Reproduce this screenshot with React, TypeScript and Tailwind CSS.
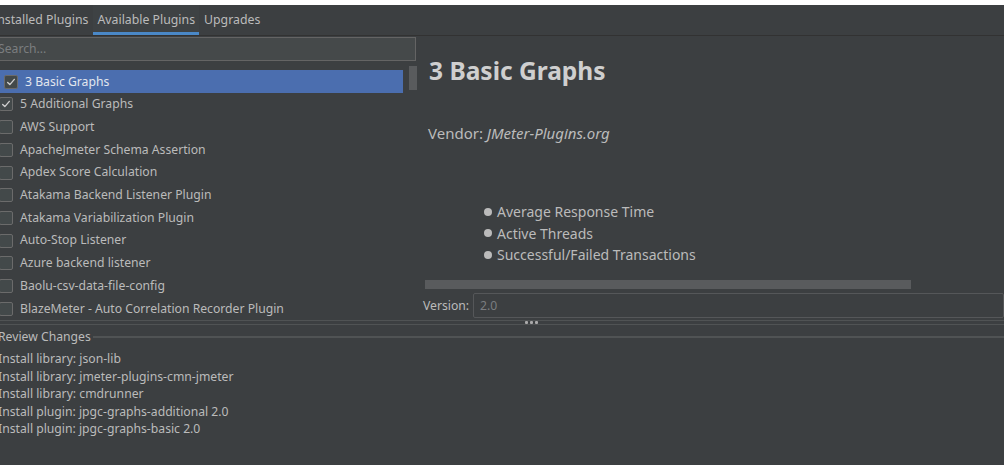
const plugins = [
  { name: "3 Basic Graphs", checked: true },
  { name: "5 Additional Graphs", checked: true },
  { name: "AWS Support", checked: false },
  { name: "ApacheJmeter Schema Assertion", checked: false },
  { name: "Apdex Score Calculation", checked: false },
  { name: "Atakama Backend Listener Plugin", checked: false },
  { name: "Atakama Variabilization Plugin", checked: false },
  { name: "Auto-Stop Listener", checked: false },
  { name: "Azure backend listener", checked: false },
  { name: "Baolu-csv-data-file-config", checked: false },
  { name: "BlazeMeter - Auto Correlation Recorder Plugin", checked: false },
];

const changes = [
  "Install library: json-lib",
  "Install library: jmeter-plugins-cmn-jmeter",
  "Install library: cmdrunner",
  "Install plugin: jpgc-graphs-additional 2.0",
  "Install plugin: jpgc-graphs-basic 2.0",
];

function CheckBox({ checked }: { checked: boolean }) {
  return (
    <span className="flex items-center justify-center w-[14px] h-[14px] shrink-0 rounded-[2px] border border-[#6b6b6b] bg-[#43494a]">
      {checked && (
        <svg viewBox="0 0 12 12" className="w-[10px] h-[10px]" fill="none" stroke="#d0d0d0" strokeWidth={1.6}>
          <path d="M2 6.5l2.6 2.6L10 2.8" strokeLinecap="round" strokeLinejoin="round" />
        </svg>
      )}
    </span>
  );
}

export default function App() {
  return (
    <div className="w-[1004px] h-[465px] overflow-hidden bg-[#3c3f41] text-[#bbbbbb] font-['Noto_Sans',sans-serif] flex flex-col">
      <div className="h-[5px] bg-white shrink-0" />

      {/* tabs */}
      <div className="h-[31px] shrink-0 flex items-stretch border-b border-[#323232] text-[12.3px]">
        <div className="-ml-[11px] px-[4px] flex items-center">Installed Plugins</div>
        <div className="ml-[1px] px-[4px] flex items-center bg-[#3e4244] border-b-[3px] border-[#4a88c7] pt-[3px]">
          Available Plugins
        </div>
        <div className="px-[5px] flex items-center">Upgrades</div>
      </div>

      {/* split */}
      <div className="h-[284px] shrink-0 flex">
        <div className="w-[420px] shrink-0 flex flex-col">
          <div className="mt-[1px] -ml-[3px] w-[419px] h-[25px] border border-[#646464] bg-[#45494a] flex items-center text-[12.2px] text-[#7b7e80]">
            Search...
          </div>
          <div className="flex mt-[9px]">
            <div className="w-[403px] flex flex-col text-[12.2px]">
              {plugins.map((p, i) => (
                <div
                  key={p.name}
                  className={
                    i === 0
                      ? "h-[22.7px] flex items-center gap-[7px] pl-[4px] bg-[#4b6eaf] text-[#e2e6ee]"
                      : "h-[22.7px] flex items-center gap-[7px] -ml-[1px]"
                  }
                >
                  <CheckBox checked={p.checked} />
                  <span>{p.name}</span>
                </div>
              ))}
            </div>
            <div className="ml-[6px] mt-[-4px] w-[8px] h-[24px] bg-[#595b5d]" />
          </div>
        </div>

        <div className="flex-1 flex flex-col pl-[5px]">
          <div className="mt-[20px] ml-[4px] text-[24.5px] font-bold text-[#cfcfcf] leading-[30px]">3 Basic Graphs</div>
          <div className="mt-[37px] ml-[3px] text-[15px] leading-[20px]">
            Vendor: <span className="italic">JMeter-Plugins.org</span>
          </div>
          <ul className="mt-[58px] ml-[59px] text-[14px] leading-[21.5px]">
            {["Average Response Time", "Active Threads", "Successful/Failed Transactions"].map((t) => (
              <li key={t} className="flex items-center gap-[5px]">
                <span className="w-[8px] h-[8px] rounded-full bg-[#bbbbbb]" />
                {t}
              </li>
            ))}
          </ul>
          <div className="mt-[14px] w-[486px] h-[9px] bg-[#595b5d]" />
          <div className="mt-[4px] flex items-center">
            <span className="-ml-[2px] w-[50px] pt-[2px] text-[12.2px]">Version:</span>
            <div className="flex-1 h-[25px] border border-[#555759] rounded-[2px] flex items-center pl-[6px] pt-[2px] text-[12.2px] text-[#7a7d80]">
              2.0
            </div>
          </div>
        </div>
      </div>

      {/* divider */}
      <div className="h-[5px] shrink-0 border-t border-b border-[#505354] relative">
        <div className="absolute left-[525px] top-[0px] flex gap-[2px]">
          <span className="w-[3px] h-[3px] bg-[#aaaaaa] rounded-[1px]" />
          <span className="w-[3px] h-[3px] bg-[#aaaaaa] rounded-[1px]" />
          <span className="w-[3px] h-[3px] bg-[#aaaaaa] rounded-[1px]" />
        </div>
      </div>

      {/* review */}
      <div className="flex items-center mt-[3px]">
        <span className="-ml-[2px] text-[12.2px] pr-[2px]">Review Changes</span>
        <div className="flex-1 h-[2px] bg-[#505354]" />
      </div>
      <div className="mt-[4px] -ml-[2px] flex flex-col text-[12.2px] leading-[17.5px]">
        {changes.map((c) => (
          <div key={c}>{c}</div>
        ))}
      </div>
    </div>
  );
}
